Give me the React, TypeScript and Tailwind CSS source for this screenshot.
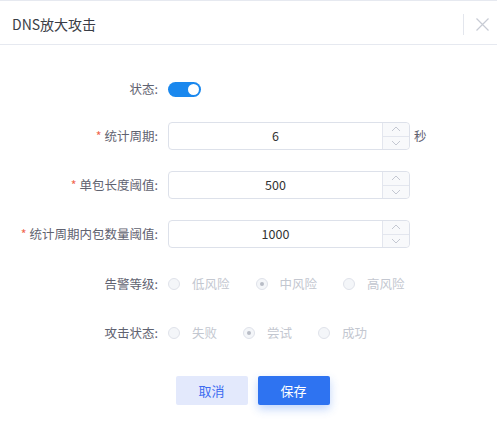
import React from "react";

const font = { fontFamily: '"Noto Sans CJK SC", "Noto Sans", sans-serif' };

function Label({ text, required }: { text: string; required?: boolean }) {
  return (
    <div className="w-[158px] shrink-0 text-right text-[12.5px] text-[#5f6270] pr-0 leading-none">
      {required && <span className="text-[#f0664f] mr-[3px]">*</span>}
      {text}:
    </div>
  );
}

function NumInput({ value }: { value: string }) {
  return (
    <div className="ml-[10px] flex h-[28px] w-[242px] rounded-[4px] border border-[#dde1ea] bg-white">
      <div className="flex flex-1 items-center justify-center text-[12.5px] text-[#333]">{value}</div>
      <div className="flex w-[27px] flex-col border-l border-[#e3e6ee] bg-[#f8f9fb] rounded-r-[4px]">
        <div className="flex flex-1 items-center justify-center border-b border-[#e3e6ee]">
          <svg width="10" height="6" viewBox="0 0 10 6" fill="none">
            <path d="M1 5L5 1L9 5" stroke="#c4c8d2" strokeWidth="1" />
          </svg>
        </div>
        <div className="flex flex-1 items-center justify-center">
          <svg width="10" height="6" viewBox="0 0 10 6" fill="none">
            <path d="M1 1L5 5L9 1" stroke="#c4c8d2" strokeWidth="1" />
          </svg>
        </div>
      </div>
    </div>
  );
}

function Radio({ label, checked }: { label: string; checked?: boolean }) {
  return (
    <div className="flex items-center">
      <span className="flex h-[12px] w-[12px] items-center justify-center rounded-full border border-[#dfe2ea] bg-[#f4f6f9]">
        {checked && <span className="h-[4px] w-[4px] rounded-full bg-[#b8bcc6]" />}
      </span>
      <span className="ml-[12px] text-[12.5px] text-[#c3c7d0]">{label}</span>
    </div>
  );
}

export default function App() {
  return (
    <div className="w-[497px] h-[427px] bg-white border-t border-[#e6e9f0] overflow-hidden" style={font}>
      <div className="relative h-[44px] border-b border-[#e6e9f0] flex items-center pl-[12px] pt-[4px]">
        <span className="text-[14px] text-[#3a3d46]">DNS放大攻击</span>
        <div className="absolute left-[463px] top-[13px] h-[21px] w-px bg-[#e3e6ed]" />
        <svg className="absolute left-[476px] top-[17px]" width="13" height="13" viewBox="0 0 13 13" fill="none">
          <path d="M0.5 0.5L12.5 12.5M12.5 0.5L0.5 12.5" stroke="#c7cbd4" strokeWidth="1.2" />
        </svg>
      </div>

      <div className="pt-[30px] flex flex-col">
        <div className="flex h-[28px] items-center">
          <Label text="状态" />
          <div className="ml-[10px] flex h-[15px] w-[33px] items-center justify-end rounded-full bg-[#1a88ee] pr-[2px]">
            <div className="h-[11px] w-[11px] rounded-full bg-white" />
          </div>
        </div>

        <div className="mt-[19px] flex h-[28px] items-center">
          <Label text="统计周期" required />
          <NumInput value="6" />
          <span className="ml-[4px] text-[12.5px] text-[#5f6270]">秒</span>
        </div>

        <div className="mt-[21px] flex h-[28px] items-center">
          <Label text="单包长度阈值" required />
          <NumInput value="500" />
        </div>

        <div className="mt-[21px] flex h-[28px] items-center">
          <Label text="统计周期内包数量阈值" required />
          <NumInput value="1000" />
        </div>

        <div className="mt-[22px] flex h-[28px] items-center">
          <Label text="告警等级" />
          <div className="ml-[10px] flex items-center gap-[26px]">
            <Radio label="低风险" />
            <Radio label="中风险" checked />
            <Radio label="高风险" />
          </div>
        </div>

        <div className="mt-[21px] flex h-[28px] items-center">
          <Label text="攻击状态" />
          <div className="ml-[10px] flex items-center gap-[26px]">
            <Radio label="失败" />
            <Radio label="尝试" checked />
            <Radio label="成功" />
          </div>
        </div>

        <div className="mt-[29px] flex justify-center gap-[10px] pl-[8px]">
          <button className="h-[29px] w-[72px] rounded-[2px] bg-[#e3e9fc] text-[13px] text-[#3d6cf0]">取消</button>
          <button className="h-[29px] w-[72px] rounded-[2px] bg-[#2e73f1] text-[13px] text-white shadow-[0_4px_10px_rgba(46,115,241,0.3)]">保存</button>
        </div>
      </div>
    </div>
  );
}
